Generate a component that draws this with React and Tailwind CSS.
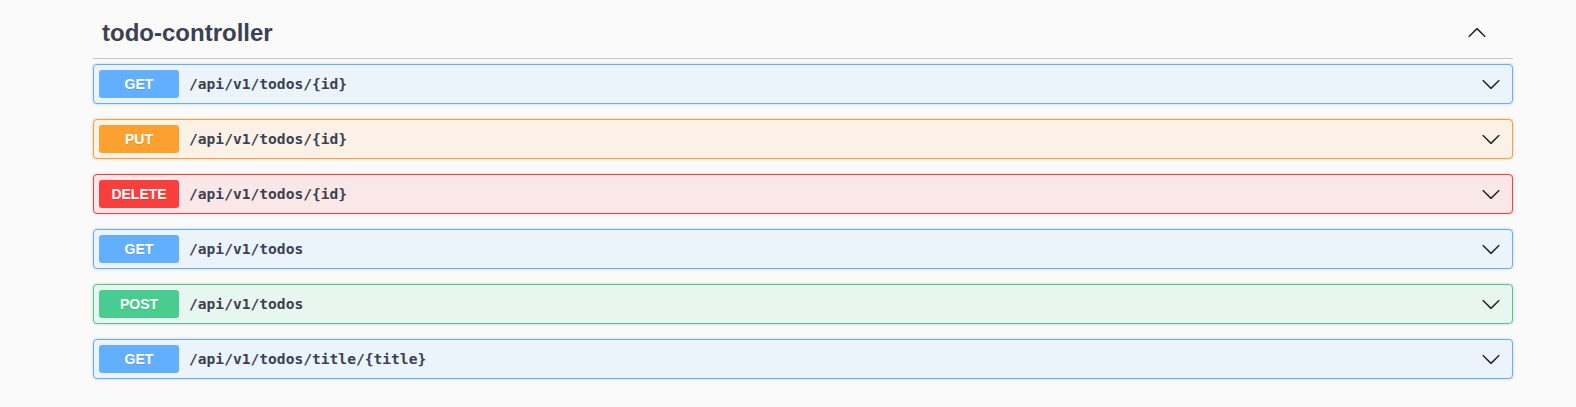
import React from "react";

const ops = [
  { method: "GET", path: "/api/v1/todos/{id}", color: "get" },
  { method: "PUT", path: "/api/v1/todos/{id}", color: "put" },
  { method: "DELETE", path: "/api/v1/todos/{id}", color: "delete" },
  { method: "GET", path: "/api/v1/todos", color: "get" },
  { method: "POST", path: "/api/v1/todos", color: "post" },
  { method: "GET", path: "/api/v1/todos/title/{title}", color: "get" },
];

const styles = {
  get: { box: "border-[#61affe] bg-[#ebf3fb]", badge: "bg-[#61affe]" },
  put: { box: "border-[#fca130] bg-[#fbf1e6]", badge: "bg-[#fca130]" },
  delete: { box: "border-[#f93e3e] bg-[#fae7e7]", badge: "bg-[#f93e3e]" },
  post: { box: "border-[#49cc90] bg-[#e8f6f0]", badge: "bg-[#49cc90]" },
};

function Arrow({ up }) {
  return (
    <svg
      width="20"
      height="20"
      viewBox="0 0 20 20"
      className={up ? "rotate-180" : ""}
    >
      <path
        fill="#222"
        d="M17.418 6.109c.272-.268.709-.268.979 0s.271.701 0 .969l-7.908 7.83c-.27.268-.707.268-.979 0l-7.908-7.83c-.27-.268-.27-.701 0-.969.271-.268.709-.268.979 0L10 13.25l7.418-7.141z"
      />
    </svg>
  );
}

function OpBlock({ op }) {
  const s = styles[op.color];
  return (
    <div
      className={`flex items-center h-[40px] mb-[15px] border rounded-[4px] p-[5px] shadow-[0_0_3px_rgba(0,0,0,0.19)] ${s.box}`}
    >
      <span
        className={`w-[80px] h-[28px] flex items-center justify-center rounded-[3px] text-white text-[14px] font-bold [text-shadow:0_1px_0_rgba(0,0,0,0.1)] ${s.badge}`}
        style={{ fontFamily: '"Liberation Sans", Arial, sans-serif' }}
      >
        {op.method}
      </span>
      <span
        className="flex-1 px-[10px] text-[14.6px] font-bold text-[#3b4151]"
        style={{ fontFamily: '"DejaVu Sans Mono", monospace' }}
      >
        {op.path}
      </span>
      <span className="mr-[6px] flex items-center">
        <Arrow />
      </span>
    </div>
  );
}

export default function App() {
  return (
    <div className="min-h-[407px] bg-[#fafafa]">
      <div className="ml-[93px] w-[1420px]">
        <div className="flex items-center h-[59px] pt-2 pl-[9px] pr-[26px] border-b border-[#c4c6cb]">
          <h3
            className="flex-1 text-[24px] font-bold text-[#3b4151]"
            style={{ fontFamily: '"Liberation Sans", Arial, sans-serif' }}
          >
            todo-controller
          </h3>
          <Arrow up />
        </div>
        <div className="mt-[5px]">
          {ops.map((op, i) => (
            <OpBlock key={i} op={op} />
          ))}
        </div>
      </div>
    </div>
  );
}
